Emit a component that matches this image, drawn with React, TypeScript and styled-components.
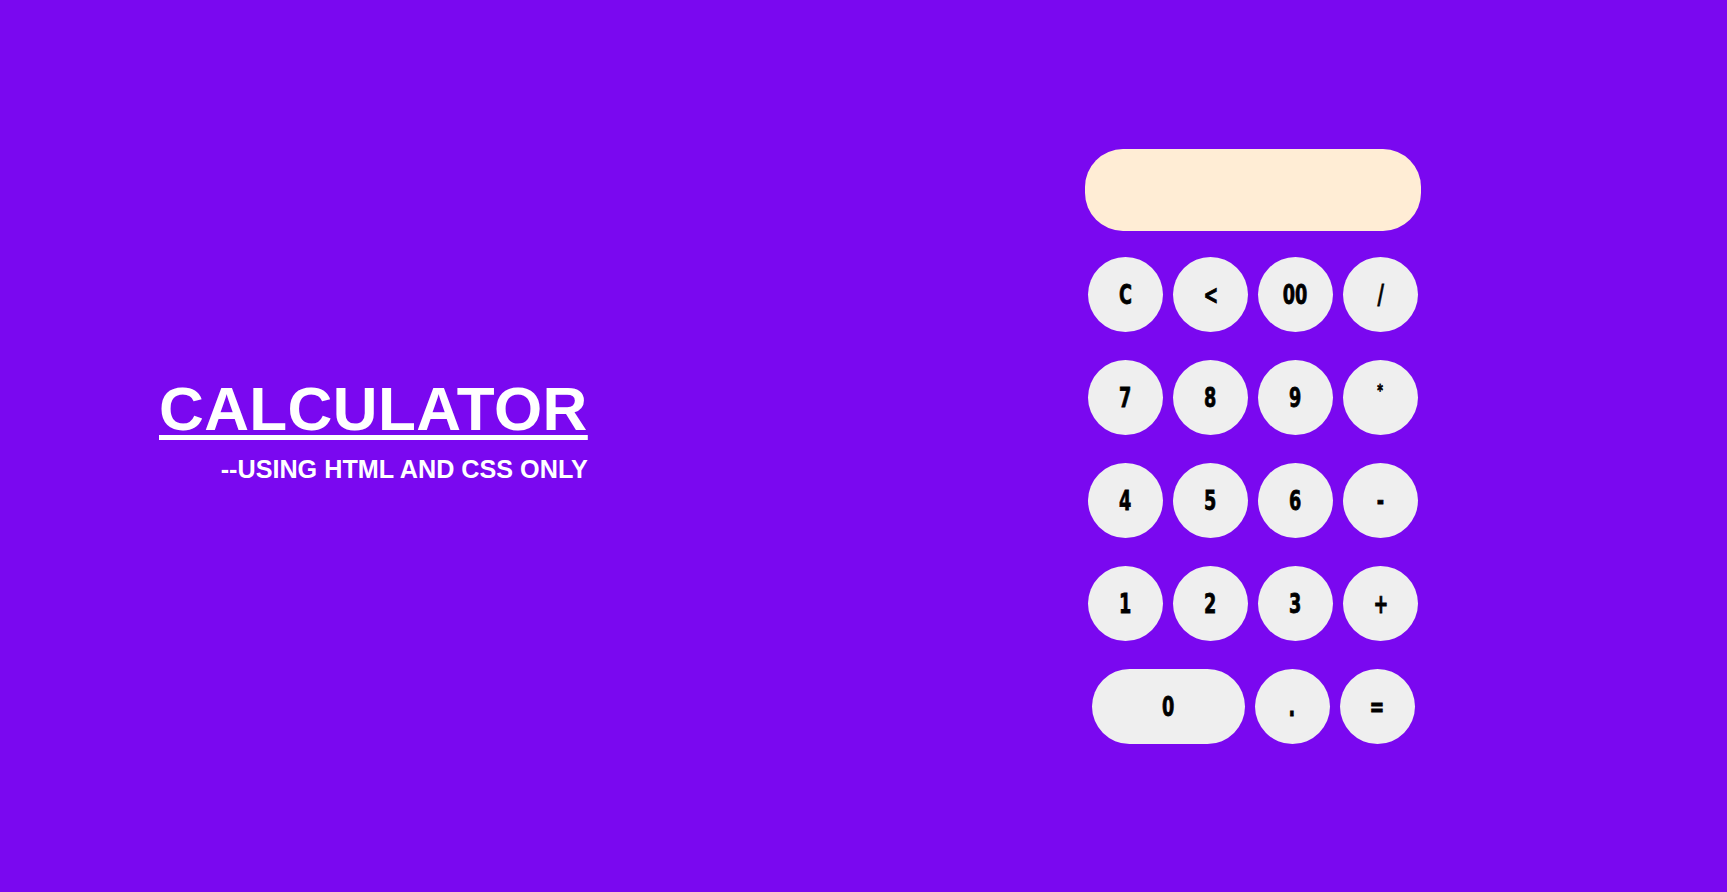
import React from "react";
import styled, { createGlobalStyle } from "styled-components";

const Global = createGlobalStyle`
  html, body { margin: 0; padding: 0; }
  body { background: #7a08f0; font-family: "Liberation Sans", Arial, sans-serif; }
`;

const Page = styled.main`
  box-sizing: border-box;
  height: 892px;
  display: flex;
  align-items: center;
  justify-content: space-between;
  padding: 0 306px 0 159px;
`;

const Heading = styled.div`
  display: flex;
  flex-direction: column;
  align-items: flex-end;
  margin-bottom: 31px;
  color: #ffffff;
`;

const Title = styled.h1`
  margin: 0;
  font-size: 62px;
  letter-spacing: 0.4px;
  line-height: 1;
  font-weight: 700;
  text-decoration: underline;
  text-decoration-thickness: 5px;
  text-underline-offset: 5px;
`;

const Subtitle = styled.h3`
  margin: 17px 0 0;
  font-size: 25.2px;
  line-height: 1;
  font-weight: 700;
`;

const Calculator = styled.section`
  width: 336px;
  display: flex;
  flex-direction: column;
  align-items: center;
`;

const Display = styled.div`
  width: 336px;
  height: 82px;
  border-radius: 38px;
  background: #ffedd5;
  margin-bottom: 26px;
`;

const Keys = styled.div`
  display: flex;
  flex-direction: column;
  gap: 28px;
`;

const Row = styled.div`
  display: flex;
  justify-content: center;
  gap: 10px;
`;

const Key = styled.button<{ $wide?: boolean }>`
  width: ${(p) => (p.$wide ? "153px" : "75px")};
  height: 75px;
  border: none;
  border-radius: 38px;
  background: #efefef;
  color: #000;
  padding: 0;
  display: flex;
  align-items: center;
  justify-content: center;
  cursor: pointer;
`;

const Label = styled.span<{ $small?: boolean }>`
  display: inline-block;
  font-family: Impact, "DejaVu Sans", sans-serif;
  font-weight: 700;
  font-size: ${(p) => (p.$small ? "16px" : "26px")};
  line-height: 1;
  transform: scaleX(0.68);
  margin-top: ${(p) => (p.$small ? "-12px" : "1px")};
  -webkit-text-stroke: 0.8px #000;
`;

const rows: string[][] = [
  ["C", "<", "00", "/"],
  ["7", "8", "9", "*"],
  ["4", "5", "6", "-"],
  ["1", "2", "3", "+"],
];

export default function App() {
  return (
    <>
      <Global />
      <Page>
        <Heading>
          <Title>CALCULATOR</Title>
          <Subtitle>--USING HTML AND CSS ONLY</Subtitle>
        </Heading>
        <Calculator>
          <Display />
          <Keys>
            {rows.map((r, i) => (
              <Row key={i}>
                {r.map((k) => (
                  <Key key={k}>
                    <Label $small={k === "*"}>{k}</Label>
                  </Key>
                ))}
              </Row>
            ))}
            <Row>
              <Key $wide>
                <Label>0</Label>
              </Key>
              <Key>
                <Label>.</Label>
              </Key>
              <Key>
                <Label>=</Label>
              </Key>
            </Row>
          </Keys>
        </Calculator>
      </Page>
    </>
  );
}
